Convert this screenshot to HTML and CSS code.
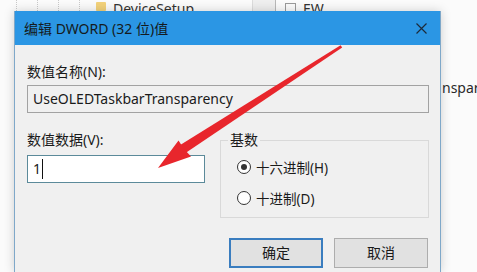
FILE: index.html
```html
<!DOCTYPE html>
<html lang="zh-CN">
<head>
    <meta charset="UTF-8">
    <title>编辑 DWORD (32 位)值</title>
    <link rel="stylesheet" href="styles.css">
</head>
<body>
    <div class="screen">
        <div class="strip">
            <div class="tree">
                <span class="tree-line"></span>
                <span class="tree-line"></span>
                <span class="tree-line"></span>
                <span class="tree-line"></span>
            </div>
            <span class="folder"></span>
            <span class="strip-text">DeviceSetup</span>
            <span class="splitter"></span>
            <span class="file-icon"></span>
            <span class="strip-text">EW</span>
        </div>

        <div class="row">
            <div class="gutter"></div>

            <div class="dialog">
                <div class="titlebar">
                    <span class="title">编辑 DWORD (32 位)值</span>
                    <svg class="close" width="11" height="11" viewBox="0 0 11 11">
                        <path d="M0.5 0.5 L10.5 10.5 M10.5 0.5 L0.5 10.5" stroke="#1c2b3a" stroke-width="1.2" fill="none"/>
                    </svg>
                </div>
                <div class="content">
                    <div class="label">数值名称(N):</div>
                    <div class="field readonly">UseOLEDTaskbarTransparency</div>

                    <div class="columns">
                        <div class="left-col">
                            <div class="label">数值数据(V):</div>
                            <div class="field edit">1<span class="caret"></span></div>
                        </div>
                        <fieldset class="group">
                            <legend>基数</legend>
                            <div class="radio-row">
                                <span class="radio checked"></span>
                                <span>十六进制(H)</span>
                            </div>
                            <div class="radio-row">
                                <span class="radio"></span>
                                <span>十进制(D)</span>
                            </div>
                        </fieldset>
                    </div>

                    <div class="buttons">
                        <div class="button default">确定</div>
                        <div class="button">取消</div>
                    </div>
                </div>
            </div>

            <div class="side">
                <span class="side-text">nspar</span>
            </div>
        </div>

        <svg class="arrow" width="477" height="272" viewBox="0 0 477 272">
            <polygon points="340.6,45.2 342.2,47.6 185.5,153 180.2,145" fill="#e8262c"/>
            <polygon points="158,168 178.5,140.5 184,149 191,156.5" fill="#e8262c"/>
        </svg>
    </div>
</body>
</html>
```

FILE: styles.css
```css
body {
    margin: 0;
    background-color: #fbfbfb;
    font-family: "Noto Sans", "Noto Sans CJK SC", sans-serif;
    font-size: 14px;
    color: #1a1a1a;
}
.screen {
    position: relative;
    width: 477px;
    height: 272px;
    overflow: hidden;
    display: flex;
    flex-direction: column;
}
.strip {
    height: 11px;
    overflow: hidden;
    display: flex;
    align-items: flex-start;
    flex-shrink: 0;
}
.tree {
    display: flex;
    gap: 20px;
    padding-left: 16px;
}
.tree-line {
    width: 0;
    height: 11px;
    border-left: 1px dotted #c9c9c9;
}
.folder {
    width: 10px;
    height: 9px;
    margin: 2px 0 0 16px;
    background-color: #f3d27a;
    border-radius: 1px;
}
.strip-text {
    margin-left: 7px;
    line-height: 18px;
    margin-top: 0;
    color: #333;
}
.splitter {
    width: 22px;
    height: 11px;
    margin-left: 58px;
    background-color: #efefef;
    border-left: 1px solid #dcdcdc;
    border-right: 1px solid #b8b8b8;
}
.file-icon {
    width: 9px;
    height: 9px;
    margin: 3px 0 0 9px;
    border: 1px solid #9a9a9a;
    border-bottom: none;
}
.row {
    flex: 1;
    display: flex;
}
.gutter {
    width: 14px;
    flex-shrink: 0;
}
.dialog {
    width: 425px;
    flex-shrink: 0;
    background-color: #f0f0f0;
    border-left: 1px solid #7fa8c9;
    border-right: 1px solid #7fa8c9;
    box-shadow: 0 0 10px rgba(0, 0, 0, 0.18);
}
.titlebar {
    height: 34px;
    background-color: #2b96e4;
    display: flex;
    align-items: center;
    justify-content: space-between;
    padding: 0 13px 0 9px;
}
.title {
    color: #151a20;
}
.content {
    padding: 18px 11px 0 12px;
}
.label {
    line-height: 18px;
    color: #1a1a1a;
}
.field {
    height: 26px;
    line-height: 26px;
    padding-left: 5px;
    margin-top: 4px;
    display: flex;
    align-items: center;
}
.readonly {
    background-color: #f0f0f0;
    border: 1px solid #a2a2a2;
}
.columns {
    display: flex;
    gap: 15px;
    margin-top: 18px;
}
.left-col {
    width: 178px;
}
.left-col .field {
    margin-top: 6px;
}
.edit {
    background-color: #ffffff;
    border: 1px solid #5b8a9a;
}
.caret {
    width: 1px;
    height: 20px;
    margin-left: 1px;
    background-color: #111;
}
.group {
    flex: 1;
    margin: 0;
    padding: 0 0 9px 16px;
    border: 1px solid #d9d9d9;
    min-width: 0;
}
.group legend {
    padding: 0 2px;
    margin-left: -9px;
    line-height: 18px;
}
.radio-row {
    display: flex;
    align-items: center;
    gap: 5px;
    height: 20px;
    font-size: 13.5px;
}
.radio-row:first-of-type {
    margin-top: 8px;
}
.radio-row + .radio-row {
    margin-top: 11px;
}
.radio {
    width: 12px;
    height: 12px;
    border: 1px solid #333;
    border-radius: 50%;
    background-color: #fff;
    display: flex;
    align-items: center;
    justify-content: center;
}
.radio.checked::after {
    content: "";
    width: 6px;
    height: 6px;
    border-radius: 50%;
    background-color: #333;
}
.buttons {
    display: flex;
    justify-content: flex-end;
    gap: 11px;
    margin-top: 20px;
    padding-right: 1px;
}
.button {
    width: 92px;
    height: 28px;
    line-height: 28px;
    text-align: center;
    background-color: #e1e1e1;
    border: 1px solid #adadad;
}
.button.default {
    width: 90px;
    height: 26px;
    line-height: 26px;
    border: 2px solid #3a7dbf;
}
.side {
    flex: 1;
    padding: 67px 0 0 1px;
    overflow: hidden;
    white-space: nowrap;
}
.side-text {
    line-height: 18px;
    color: #2a2a2a;
}
.arrow {
    position: absolute;
    left: 0;
    top: 0;
    pointer-events: none;
}
```
